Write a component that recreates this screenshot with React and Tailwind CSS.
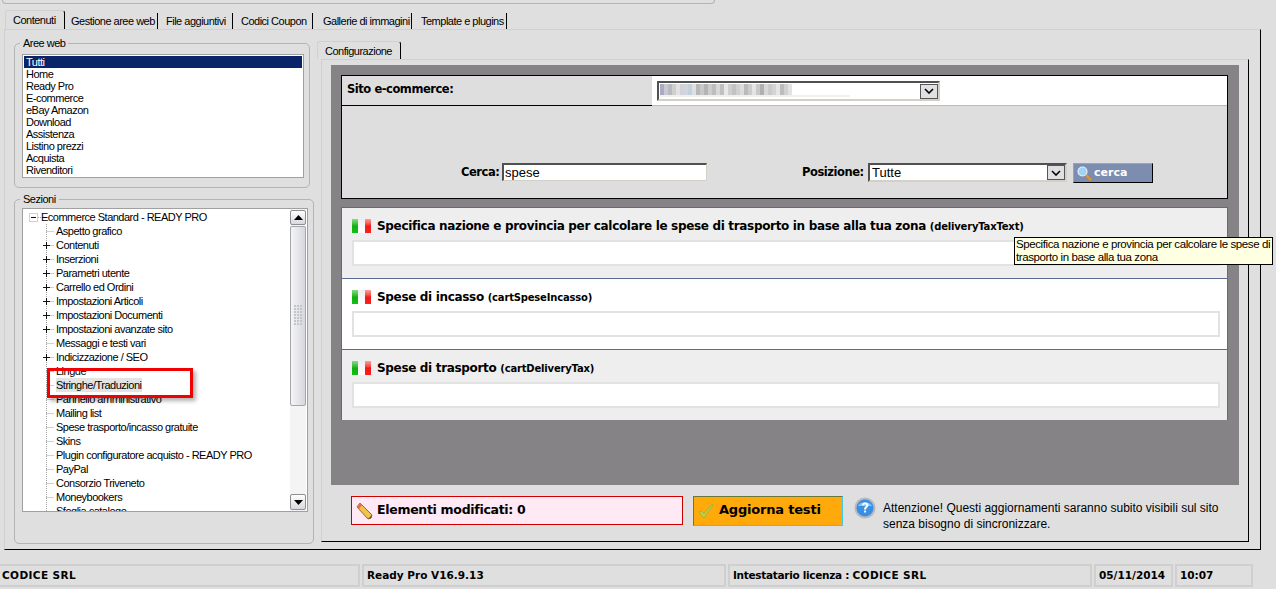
const font = "font-['Tahoma','Liberation_Sans',sans-serif]";

const mainTabs = [
  { label: 'Gestione aree web', cls: 'w-[93px] pl-[6px]' },
  { label: 'File aggiuntivi', cls: 'w-[75px] pl-[8px]' },
  { label: 'Codici Coupon', cls: 'w-[80px] pl-[8px]' },
  { label: 'Gallerie di immagini', cls: 'w-[99px] pl-[10px]' },
  { label: 'Template e plugins', cls: 'w-[95px] pl-[9px]' },
];
const aree = ['Home', 'Ready Pro', 'E-commerce', 'eBay Amazon', 'Download', 'Assistenza', 'Listino prezzi', 'Acquista', 'Rivenditori'];

const tree = [
  ['Aspetto grafico', false],
  ['Contenuti', true],
  ['Inserzioni', true],
  ['Parametri utente', true],
  ['Carrello ed Ordini', true],
  ['Impostazioni Articoli', true],
  ['Impostazioni Documenti', true],
  ['Impostazioni avanzate sito', true],
  ['Messaggi e testi vari', false],
  ['Indicizzazione / SEO', true],
  ['Lingue', false],
  ['Stringhe/Traduzioni', false, true],
  ['Pannello amministrativo', false],
  ['Mailing list', false],
  ['Spese trasporto/incasso gratuite', false],
  ['Skins', false],
  ['Plugin configuratore acquisto - READY PRO', false],
  ['PayPal', false],
  ['Consorzio Triveneto', false],
  ['Moneybookers', false],
  ['Sfoglia catalogo', false],
];

const cards = [
  { title: 'Specifica nazione e provincia per calcolare le spese di trasporto in base alla tua zona', code: 'deliveryTaxText', bg: 'bg-[#eeeeee]' },
  { title: 'Spese di incasso', code: 'cartSpeseIncasso', bg: 'bg-white' },
  { title: 'Spese di trasporto', code: 'cartDeliveryTax', bg: 'bg-[#eeeeee]' },
];

// sito oscurato nello screenshot: blocchi sfocati
const blurTop = ['#a9aac4', '#c9c9d2', '#b9b9c0', '#cfcfcf', '#e2e2e2', '#d2d2d8', '#cfd6de', '#c4d0dc', '#e0e0e0', '#b8b6b8', '#c8c8c8', '#b4b4b4', '#cdcdcd', '#bdbdbd', '#d8d8d8', '#c0c0c0', '#e8e8e8', '#cfcfcf', '#c2c2c2', '#d0d0d0', '#dcdcdc', '#bababa', '#cccccc', '#e4e4e4', '#c8c8c8', '#b0b0b0', '#d8d8d8', '#cacaca', '#d4d4d4', '#e6e6e6', '#bcbcbc', '#d0d0d0', '#e2e2e2'];

function Flag() {
  return (
    <div className="flex w-[19px] h-[14px] shrink-0">
      <div className="flex-1 bg-gradient-to-b from-[#7ee07e] via-[#0fae12] to-[#12c015]" />
      <div className="flex-1 bg-gradient-to-b from-[#eeeeee] to-white" />
      <div className="flex-1 bg-gradient-to-b from-[#ff9a9a] via-[#f01818] to-[#ff2020]" />
    </div>
  );
}

function Chevron() {
  return (
    <div className="w-[18px] h-[15px] bg-[#e0dfe3] border border-[#555] flex items-center justify-center shrink-0">
      <svg width="10" height="6" viewBox="0 0 10 6"><path d="M1 1l4 4 4-4" fill="none" stroke="#000" strokeWidth="1.6" /></svg>
    </div>
  );
}

function Select({ className, children }) {
  return (
    <div className={`bg-white border-t-2 border-l-2 border-[#505050] border-r-2 border-b-2 border-r-[#d4d0c8] border-b-[#d4d0c8] flex items-center justify-between ${className}`}>
      {children}
      <Chevron />
    </div>
  );
}

function Group({ label, className, children }) {
  return (
    <fieldset className={`border border-[#b4b4b4] rounded-[5px] ${className}`}>
      <legend className="-ml-[2px] px-[3px] text-[11px] tracking-[-0.5px] leading-[13px] text-black">{label}</legend>
      {children}
    </fieldset>
  );
}

function TreeRow({ label, plus, selected }) {
  return (
    <div className="h-[14px] flex items-center pl-[19px] text-[11px] tracking-[-0.5px] leading-[14px] text-black whitespace-nowrap">
      <svg width="14" height="14" viewBox="0 0 14 14" className="shrink-0">
        <path d="M4.5 0v14M4.500 7.500H12" stroke="#a0a0a0" strokeDasharray="1 1" />
        {plus && <path d="M1 7.500h7M4.500 4v7" stroke="#111" strokeWidth="1" />}
      </svg>
      <span className={selected ? 'bg-[#e3e3e3] pr-[1px]' : ''}>{label}</span>
    </div>
  );
}

function Scrollbar() {
  return (
    <div className="w-[16px] mr-[1px] py-[1px] shrink-0 bg-[#f4f4f4] flex flex-col">
      <div className="h-[15px] border border-[#8e8f8f] rounded-[2px] bg-gradient-to-b from-white to-[#d8d8de] flex items-center justify-center">
        <svg width="9" height="5" viewBox="0 0 9 5"><path d="M4.5 0L9 5H0z" fill="#000" /></svg>
      </div>
      <div className="h-[180px] mt-[1px] border border-[#a5a5ae] rounded-[2px] bg-gradient-to-r from-[#f5f5f7] to-[#d6d6de] flex items-center justify-center">
        <svg width="8" height="22" viewBox="0 0 8 22">
          {[0, 3, 6, 9, 12, 15, 18].map((y) => (
            <g key={y} fill="#c4c4cc"><rect x="0" y={y} width="2" height="2" /><rect x="3" y={y} width="2" height="2" /><rect x="6" y={y} width="2" height="2" /></g>
          ))}
        </svg>
      </div>
      <div className="flex-1" />
      <div className="h-[16px] border border-[#8e8f8f] rounded-[2px] bg-gradient-to-b from-white to-[#d8d8de] flex items-center justify-center">
        <svg width="9" height="5" viewBox="0 0 9 5"><path d="M4.5 5L9 0H0z" fill="#000" /></svg>
      </div>
    </div>
  );
}

function LeftColumn() {
  return (
    <div className="w-[300px] ml-[9px] shrink-0">
      <Group label="Aree web" className="w-[296px] h-[151px] pl-[7px]">
        <div className="mt-[4px] w-[282px] h-[124px] border border-[#a0a0a0] bg-white p-[1px] text-[11px] tracking-[-0.5px] leading-[12px] text-black">
          <div className="bg-[#0a246a] text-white pl-[2px] h-[12px]">Tutti</div>
          {aree.map((a) => <div key={a} className="pl-[2px] h-[12px]">{a}</div>)}
        </div>
      </Group>
      <Group label="Sezioni" className="mt-[5px] w-[300px] h-[351px] pl-[7px]">
        <div className="relative mt-[2px] w-[286px] h-[304px] border border-[#a0a0a0] bg-white flex overflow-hidden">
          <div className="flex-1 pt-[1px] overflow-hidden">
            <div className="h-[14px] flex items-center pl-[6px] text-[11px] tracking-[-0.5px] leading-[14px] text-black whitespace-nowrap">
              <svg width="12" height="14" viewBox="0 0 12 14" className="shrink-0">
                <rect x="0.500" y="3.500" width="8" height="8" fill="none" stroke="#d0d0d0" />
                <path d="M2 7.500h5" stroke="#111" />
                <path d="M9 7.500h3" stroke="#a0a0a0" strokeDasharray="1 1" />
              </svg>
              <span>Ecommerce Standard - READY PRO</span>
            </div>
            {tree.map(([label, plus, selected]) => <TreeRow key={label} label={label} plus={plus} selected={selected} />)}
          </div>
          <Scrollbar />
          {/* evidenziazione rossa sopra l'albero */}
          <div className="absolute left-[24px] top-[159px] w-[146px] h-[30px] border-[3px] border-[#f00000] shadow-[3px_3px_4px_rgba(0,0,0,0.3)]" />
        </div>
      </Group>
    </div>
  );
}

function Card({ title, code, bg }) {
  return (
    <div className={`${bg} h-[71px] border-t border-[#5a6a90] px-[10px] pt-[10px]`}>
      <div className="flex items-center gap-[6px] h-[15px]">
        <Flag />
        <span className="pt-[2px] font-['DejaVu_Sans',sans-serif] font-bold text-[12px] tracking-[-0.33px] leading-[15px] text-black whitespace-nowrap">
          {title} <span className="text-[10px] tracking-[-0.18px]">({code})</span>
        </span>
      </div>
      <div className="mt-[7px] w-[868px] h-[26px] bg-white border-2 border-[#e2e2e2]" />
    </div>
  );
}

function Config() {
  return (
    <div className="w-[908px] h-[420px] ml-[9px] mt-[5px] bg-[#858385] px-[10px] pt-[10px]">
      <div className="w-[887px] h-[124px] border border-black bg-[#dedede] font-['DejaVu_Sans',sans-serif] font-bold text-[11.5px] text-black">
        <div className="h-[30px] flex">
          <div className="w-[310px] border-b border-black pl-[5px] pt-[6px] leading-[15px] tracking-[-0.45px]">Sito e-commerce:</div>
          <div className="flex-1 bg-white border-b border-[#bbbbbb] pl-[5px] pt-[5px]">
            <Select className="w-[283px] h-[20px]">
              <div className="ml-[1px] w-[190px] h-[14px] flex flex-col">
                <div className="flex h-[11px]">
                  {blurTop.map((c, i) => <div key={i} className="w-[4px] h-full" style={{ backgroundColor: c }} />)}
                </div>
                <div className="h-[2px] bg-[#f0f0f0]" />
              </div>
            </Select>
          </div>
        </div>
        <div className="flex items-start mt-[57px]">
          <span className="ml-[119px] w-[40px] mt-[2px] leading-[15px] tracking-[-0.45px]">Cerca:</span>
          <div className="ml-[1px] w-[205px] h-[18px] bg-white border-t-2 border-l-2 border-t-[#505050] border-l-[#505050] border-r border-b border-r-[#d4d0c8] border-b-[#d4d0c8] pl-[1px] font-['Liberation_Sans',sans-serif] font-normal text-[13px] leading-[15px]">spese</div>
          <span className="ml-[95px] w-[66px] mt-[2px] leading-[15px] tracking-[-0.45px]">Posizione:</span>
          <Select className="w-[199px] h-[19px] font-['Liberation_Sans',sans-serif] font-normal text-[13px] pl-[2px]">Tutte</Select>
          <div className="ml-[6px] w-[80px] h-[20px] bg-[#7d8db0] border border-[#43c5ee] border-r-black border-b-black flex items-center pl-[3px] text-white">
            <svg width="15" height="15" viewBox="0 0 15 15" className="shrink-0">
              <path d="M8.5 8.5l5 5" stroke="#e8902a" strokeWidth="2.4" strokeLinecap="round" />
              <circle cx="5.5" cy="5.5" r="4.5" fill="#9fd4f5" stroke="#dfeffa" strokeWidth="1.2" />
            </svg>
            <span className="ml-[2px] text-[11px]">cerca</span>
          </div>
        </div>
      </div>
      <div className="mt-[8px] w-[887px] border-l border-r border-[#5a6a90]">
        {cards.map((c) => <Card key={c.code} {...c} />)}
      </div>
    </div>
  );
}

function Footer() {
  return (
    <div className="flex items-start mt-[11px] ml-[29px]">
      <div className="w-[332px] h-[29px] bg-[#ffe9f5] border border-[#d00000] flex items-center pl-[4px] gap-[3px] font-['DejaVu_Sans',sans-serif] font-bold text-[12.5px] tracking-[-0.3px] text-black whitespace-nowrap">
        <svg width="18" height="18" viewBox="0 0 18 18" className="shrink-0">
          <path d="M4 1l12 12-1 3-3 1L1 5z" fill="#f2c24a" stroke="#9a6a20" strokeWidth="1" />
          <path d="M1 5l3-4 2 2-3 4z" fill="#e86a5a" />
          <path d="M12 17l3-1 1-3z" fill="#444" />
        </svg>
        Elementi modificati: 0
      </div>
      <div className="ml-[10px] w-[150px] h-[30px] bg-[#ffa90a] border border-[#6b7a3a] border-r-[#43c5ee] border-b-[#43c5ee] flex items-center pl-[4px] gap-[5px] font-['DejaVu_Sans',sans-serif] font-bold text-[13px] tracking-[-0.2px] text-black whitespace-nowrap">
        <svg width="16" height="16" viewBox="0 0 16 16" className="shrink-0">
          <path d="M1 9l2-1 3 3L14 1l1 1L6 15z" fill="#b5d94a" stroke="#8aa83a" strokeWidth="0.6" />
        </svg>
        <span className="-mt-[2px]">Aggiorna testi</span>
      </div>
      <svg width="22" height="22" viewBox="0 0 22 22" className="ml-[11px] mt-[1px] shrink-0">
        <circle cx="11" cy="11" r="10.5" fill="#b8b8c2" />
        <circle cx="11" cy="11" r="8.5" fill="#3a8fe0" />
        <path d="M4 9a7.5 6 0 0 1 14 0z" fill="#8cc4f4" />
        <path d="M8 8.2c0-3.6 6.4-3.6 6.4.1 0 2.200-2.300 2.400-2.300 4.200h-2c0-2.800 2.200-3 2.200-4.200 0-1.300-2.200-1.300-2.300-.1zM10.100 13.500h2v2h-2z" fill="#fff" />
      </svg>
      <div className="ml-[7px] mt-[4px] text-[12px] leading-[16px] text-black whitespace-nowrap">
        Attenzione! Questi aggiornamenti saranno subito visibili sul sito<br />senza bisogno di sincronizzare.
      </div>
    </div>
  );
}

function StatusCell({ className, children }) {
  return (
    <div className={`h-[23px] border-2 border-[#cfcfcf] flex items-center font-['DejaVu_Sans',sans-serif] font-bold text-[10.5px] text-black whitespace-nowrap ${className}`}>
      {children}
    </div>
  );
}

export default function App() {
  return (
    <div className={`relative w-[1276px] h-[589px] overflow-hidden bg-[#dfdfdf] ${font}`}>
      <div className="w-[713px] h-[4px] ml-[2px] border-b border-r border-l border-[#b4b4b4] rounded-b-[4px]" />
      {/* tab principali */}
      <div className="flex items-end h-[25px] ml-[5px] text-[11px] tracking-[-0.5px] text-black whitespace-nowrap">
        <div className="h-[19px] w-[60px] border-t border-l border-r border-t-[#d0d0d0] border-l-[#d0d0d0] border-r-black rounded-t-[3px] pl-[7px] leading-[18px]">Contenuti</div>
        {mainTabs.map((t) => (
          <div key={t.label} className={`h-[16px] border-r border-black leading-[16px] ${t.cls}`}>{t.label}</div>
        ))}
      </div>
      <div className="w-[1257px] h-[521px] ml-[4px] border-r border-b border-black border-t border-t-[#d0d0d0] border-l border-l-[#d0d0d0] flex">
        <div className="pt-[7px]"><LeftColumn /></div>
        <div className="w-[928px] ml-[7px] mt-[11px]">
          <div className="-ml-[4px] h-[18px] w-[84px] border-t border-l border-r border-t-[#d0d0d0] border-l-[#d0d0d0] border-r-black rounded-t-[3px] pl-[7px] text-[11px] tracking-[-0.5px] leading-[18px] text-black">Configurazione</div>
          <div className="h-[483px] border-t border-l border-t-[#d0d0d0] border-l-[#d0d0d0] border-r border-b border-r-black border-b-black">
            <Config />
            <Footer />
          </div>
        </div>
      </div>
      {/* barra di stato */}
      <div className="flex mt-[14px]">
        <StatusCell className="w-[360px] pl-[2px] border-l-0 tracking-[0.4px]">CODICE SRL</StatusCell>
        <StatusCell className="w-[364px] ml-[2px] pl-[3px]">Ready Pro V16.9.13</StatusCell>
        <StatusCell className="w-[364px] ml-[2px] pl-[3px] tracking-[-0.3px]">Intestatario licenza :&nbsp;<span className="tracking-[0.4px]">CODICE SRL</span></StatusCell>
        <StatusCell className="w-[79px] ml-[2px] pl-[3px]">05/11/2014</StatusCell>
        <StatusCell className="w-[78px] ml-[2px] pl-[3px]">10:07</StatusCell>
      </div>
      {/* tooltip */}
      <div className="absolute left-[1014px] top-[237px] w-[259px] h-[28px] bg-[#ffffe1] border border-black pl-[1px] text-[11.5px] tracking-[-0.4px] leading-[13px] text-black whitespace-nowrap">
        Specifica nazione e provincia per calcolare le spese di<br />trasporto in base alla tua zona
      </div>
    </div>
  );
}
